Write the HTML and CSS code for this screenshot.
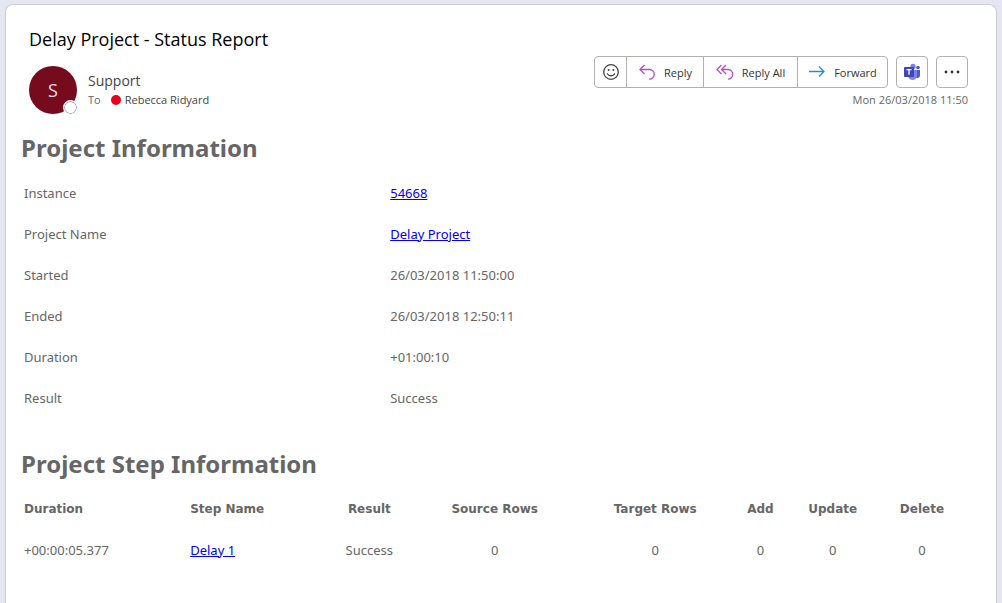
FILE: index.html
```html
<!DOCTYPE html>
<html lang="en">
<head>
<meta charset="utf-8">
<meta name="viewport" content="width=device-width, initial-scale=1">
<title>Delay Project - Status Report</title>
<link rel="stylesheet" href="styles.css">
</head>
<body>
<main class="card">
  <header class="mail-header">
    <div class="mail-meta">
      <h1 class="subject">Delay Project - Status Report</h1>
      <div class="sender">
        <div class="avatar">S<span class="presence"></span></div>
        <div class="people">
          <div class="sender-name">Support</div>
          <div class="recipient"><span class="to">To</span><span class="dot"></span><span>Rebecca Ridyard</span></div>
        </div>
      </div>
    </div>
    <div class="mail-side">
      <div class="toolbar">
        <div class="group">
          <button class="btn btn-icon" type="button" aria-label="React">
            <svg width="18" height="18" viewBox="0 0 18 18" fill="none" stroke="#444" stroke-width="1.3"><circle cx="9" cy="9" r="7.3"/><path d="M5.3 10.8c1.5 2.6 5.9 2.6 7.4 0" stroke-linecap="round"/><circle cx="6.6" cy="7" r="1" fill="#444" stroke="none"/><circle cx="11.4" cy="7" r="1" fill="#444" stroke="none"/></svg>
          </button>
          <button class="btn btn-reply" type="button">
            <svg width="18" height="18" viewBox="0 0 18 18" fill="none" stroke="#b150c0" stroke-width="1.3"><path d="M6.5 2 2 6.500l4.500 4.500M2 6.500h9.500a4.800 4.800 0 0 1 0 9.600H11"/></svg>
            <span>Reply</span>
          </button>
          <button class="btn btn-reply-all" type="button">
            <svg width="18" height="18" viewBox="0 0 18 18" fill="none" stroke="#b150c0" stroke-width="1.3"><path d="M5.500 2 1 6.500 5.500 11M10 2 5.500 6.500 10 11M5.500 6.500H12a4.800 4.800 0 0 1 0 9.600"/></svg>
            <span>Reply All</span>
          </button>
          <button class="btn btn-forward" type="button">
            <svg width="18" height="18" viewBox="0 0 18 18" fill="none" stroke="#2b8bd0" stroke-width="1.3"><path d="M1 8.500h15M11 3.500l5 5-5 5"/></svg>
            <span>Forward</span>
          </button>
        </div>
        <button class="btn btn-single" type="button" aria-label="Share to Teams">
          <svg width="18" height="18" viewBox="0 0 18 18"><circle cx="15" cy="4.500" r="1.800" fill="#5059c9"/><path d="M12 7h5v5a3 3 0 0 1-3 3h-2z" fill="#5059c9"/><circle cx="10" cy="3.500" r="2.700" fill="#7b83eb"/><path d="M6 7h8v5.500a4.500 4.500 0 0 1-9 0z" fill="#7b83eb"/><rect x="1" y="4" width="10" height="10" rx="1" fill="#4048b0"/><path d="M3.500 6.600h5M6 6.600v5.200" stroke="#fff" stroke-width="1.300"/></svg>
        </button>
        <button class="btn btn-single" type="button" aria-label="More actions">
          <svg width="18" height="18" viewBox="0 0 18 18" fill="#333"><circle cx="3" cy="9" r="1.400"/><circle cx="9" cy="9" r="1.400"/><circle cx="15" cy="9" r="1.400"/></svg>
        </button>
      </div>
      <time class="date" datetime="2018-03-26T11:50">Mon 26/03/2018 11:50</time>
    </div>
  </header>
  <div class="content">
    <h2 class="heading">Project Information</h2>
    <table class="table info">
      <tbody>
        <tr><th scope="row">Instance</th><td><a href="#instance">54668</a></td></tr>
        <tr><th scope="row">Project Name</th><td><a href="#project">Delay Project</a></td></tr>
        <tr><th scope="row">Started</th><td>26/03/2018 11:50:00</td></tr>
        <tr><th scope="row">Ended</th><td>26/03/2018 12:50:11</td></tr>
        <tr><th scope="row">Duration</th><td>+01:00:10</td></tr>
        <tr><th scope="row">Result</th><td>Success</td></tr>
      </tbody>
    </table>
    <h2 class="heading">Project Step Information</h2>
    <table class="table steps">
      <colgroup><col class="c-duration"><col class="c-name"><col class="c-result"><col class="c-source"><col class="c-target"><col class="c-add"><col class="c-update"><col class="c-delete"></colgroup>
      <thead>
        <tr><th scope="col">Duration</th><th scope="col">Step Name</th><th scope="col">Result</th><th scope="col">Source Rows</th><th scope="col">Target Rows</th><th scope="col">Add</th><th scope="col">Update</th><th scope="col">Delete</th></tr>
      </thead>
      <tbody>
        <tr><td>+00:00:05.377</td><td><a href="#step">Delay 1</a></td><td>Success</td><td>0</td><td>0</td><td>0</td><td>0</td><td>0</td></tr>
      </tbody>
    </table>
  </div>
</main>
</body>
</html>
```
FILE: styles.css
```css
* { box-sizing: border-box; }

body {
  display: flex;
  min-height: 100vh;
  margin: 0;
  padding: 4px 5px 0;
  background: #e4e7f0;
  color: #444;
  font-family: "Open Sans", "Noto Sans", sans-serif;
  font-size: 11px;
}

.card {
  flex: 1;
  border: 1px solid #cdced2;
  border-bottom: 0;
  border-radius: 8px 8px 0 0;
  background: #fff;
}

.mail-header {
  display: flex;
  justify-content: space-between;
  padding: 22px 28px 0 23px;
}

.subject {
  margin: 0;
  color: #000;
  font-size: 18px;
  font-weight: 400;
  line-height: 24px;
}

.sender {
  display: flex;
  gap: 11px;
  margin-top: 15px;
}

.avatar {
  position: relative;
  display: grid;
  place-items: center;
  width: 48px;
  height: 48px;
  border-radius: 50%;
  background: #750b1c;
  color: #eadde0;
  font-size: 18px;
}

.presence {
  position: absolute;
  right: -1px;
  bottom: -1px;
  width: 15px;
  height: 15px;
  border: 1px solid #fff;
  border-radius: 50%;
  background: #fff;
  box-shadow: inset 0 0 0 1px #8fb0c0;
}

.people { padding-top: 5px; }

.sender-name {
  font-size: 14px;
  line-height: 20px;
}

.recipient {
  display: flex;
  align-items: center;
  line-height: 18px;
}

.to { color: #666; }

.dot {
  width: 10px;
  height: 10px;
  margin: 0 4px 0 10px;
  border-radius: 50%;
  background: #e8001c;
}

.mail-side {
  display: flex;
  flex-direction: column;
  align-items: flex-end;
  padding-top: 29px;
}

.toolbar {
  display: flex;
  gap: 8px;
}

.group {
  display: flex;
  border: 1px solid #b3b0ad;
  border-radius: 4px;
}

.btn {
  display: flex;
  align-items: center;
  justify-content: center;
  height: 30px;
  padding: 0;
  border: 0;
  background: transparent;
  color: #333;
  font: inherit;
}

.btn svg { flex: none; }
.group .btn + .btn { border-left: 1px solid #b3b0ad; }
.btn-icon { width: 31px; }
.btn-reply { width: 77px; gap: 8px; }
.btn-reply-all { width: 94px; gap: 8px; }
.btn-forward { width: 90px; gap: 8px; }

.btn-single {
  width: 32px;
  height: 32px;
  border: 1px solid #b3b0ad;
  border-radius: 4px;
}

.date {
  margin-top: 3px;
  color: #666;
  line-height: 18px;
}

.content {
  padding: 16px 36px 0 15px;
  color: #666;
  font-family: "Noto Sans", "Open Sans", sans-serif;
  font-size: 13px;
}

.heading {
  margin: 0;
  font-size: 24px;
  font-weight: 700;
  line-height: 36px;
}

.table {
  width: 100%;
  margin-top: 6px;
  border-collapse: collapse;
  table-layout: fixed;
}

.table th,
.table td {
  height: 41px;
  padding: 0 3px;
  line-height: 18px;
  text-align: left;
}

.table a { color: #00e; }
.info { margin-bottom: 28px; }
.info th { width: 39%; font-weight: 400; }

.steps thead th {
  font-family: "DejaVu Sans", Verdana, sans-serif;
  font-size: 12px;
}

.steps th:nth-child(n+3),
.steps td:nth-child(n+3) { text-align: center; }

.c-duration { width: 17.7%; }
.c-name { width: 14.2%; }
.c-result { width: 10.4%; }
.c-source { width: 16.3%; }
.c-target { width: 17.9%; }
.c-add { width: 4.5%; }
.c-update { width: 10.9%; }
.c-delete { width: 8.1%; }
```
